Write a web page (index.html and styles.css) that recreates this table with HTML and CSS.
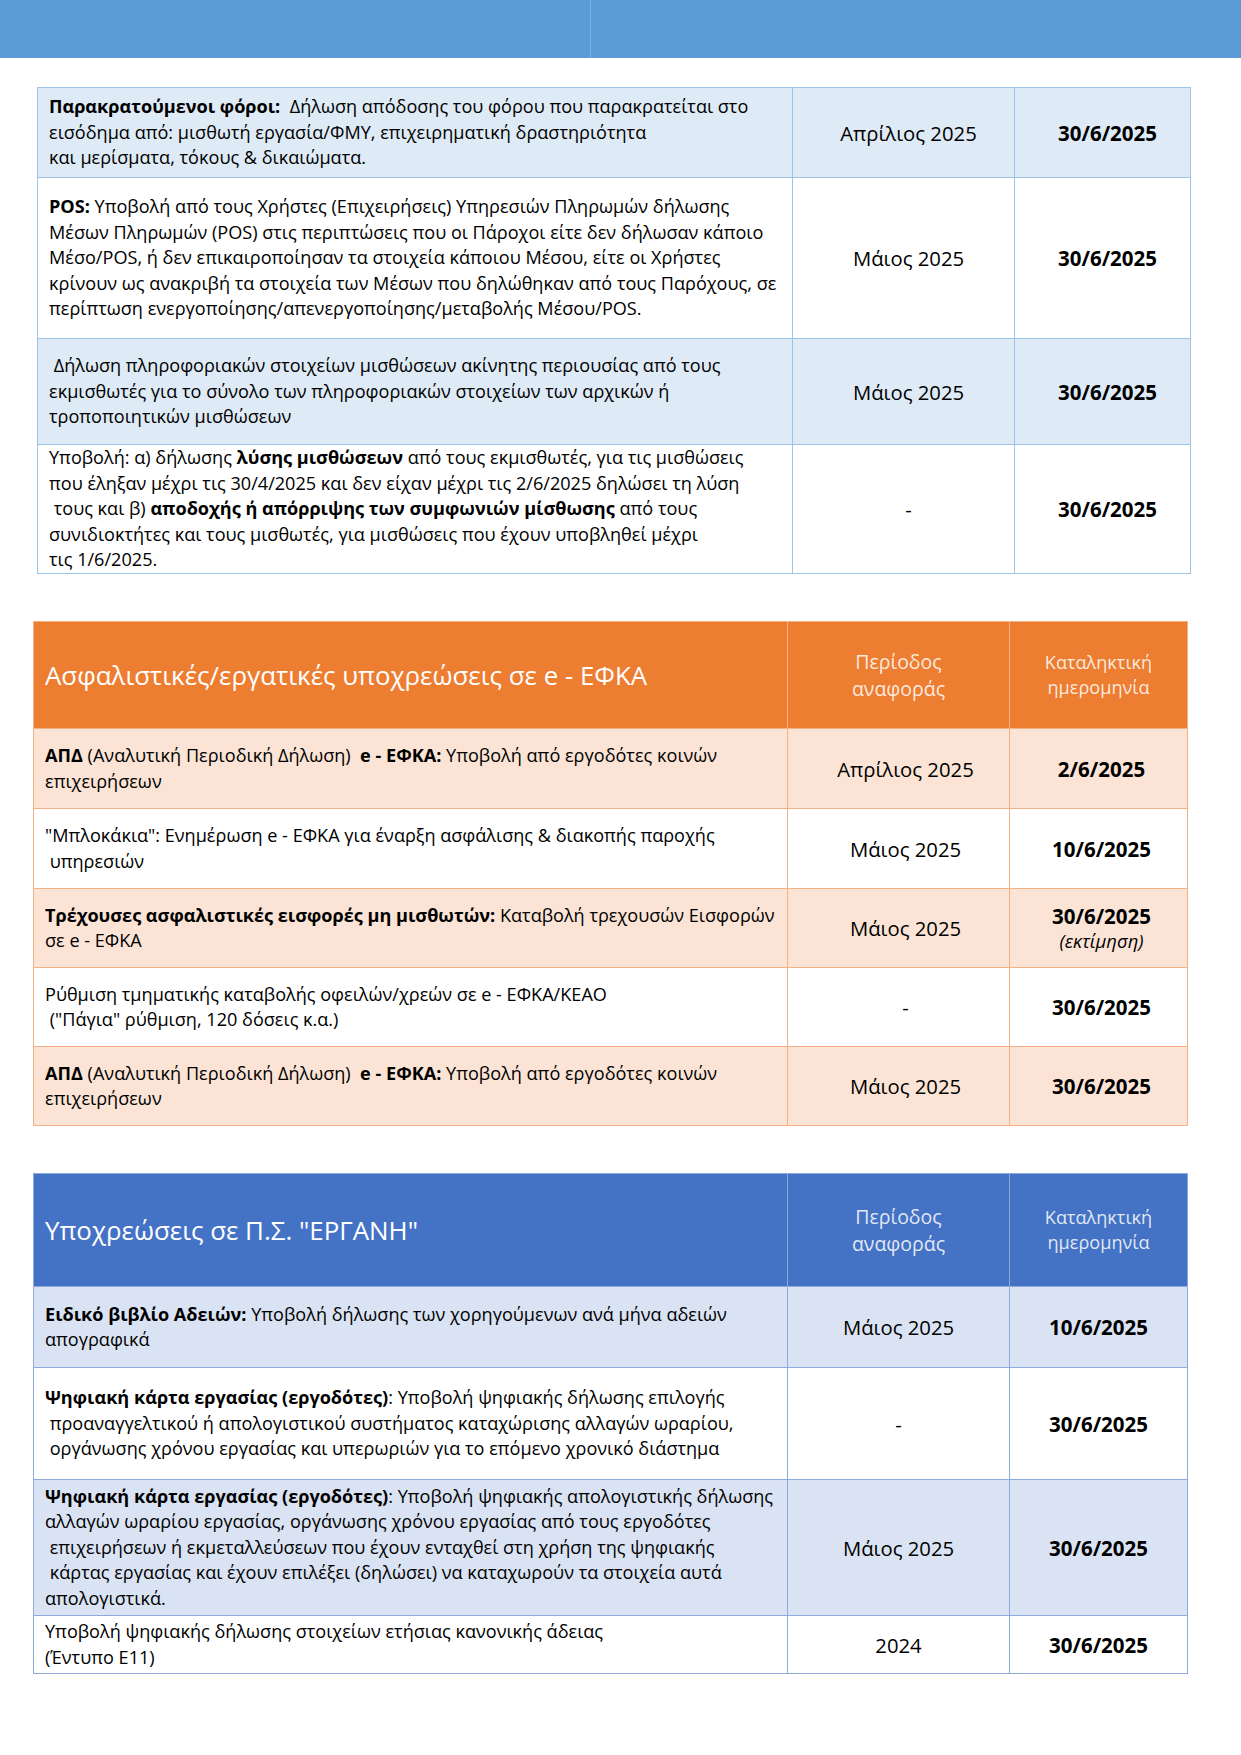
FILE: index.html
```html
<!DOCTYPE html>
<html lang="el">
<head>
<meta charset="utf-8">
<link rel="stylesheet" href="styles.css">
</head>
<body>
<div class="topbar"><div class="topbar-left"></div><div class="topbar-right"></div></div>

<table class="grid t1">
  <colgroup><col class="c1a"><col class="c2"><col class="c3a"></colgroup>
  <tr class="shade h90">
    <td class="desc"><b>Παρακρατούμενοι φόροι:</b>&nbsp; Δήλωση απόδοσης του φόρου που παρακρατείται στο<br>εισόδημα από: μισθωτή εργασία/ΦΜΥ, επιχειρηματική δραστηριότητα<br>και μερίσματα, τόκους &amp; δικαιώματα.</td>
    <td class="period">Απρίλιος 2025</td>
    <td class="date">30/6/2025</td>
  </tr>
  <tr class="h161">
    <td class="desc"><b>POS:</b> Υποβολή από τους Χρήστες (Επιχειρήσεις) Υπηρεσιών Πληρωμών δήλωσης<br>Μέσων Πληρωμών (POS) στις περιπτώσεις που οι Πάροχοι είτε δεν δήλωσαν κάποιο<br>Μέσο/POS, ή δεν επικαιροποίησαν τα στοιχεία κάποιου Μέσου, είτε οι Χρήστες<br>κρίνουν ως ανακριβή τα στοιχεία των Μέσων που δηλώθηκαν από τους Παρόχους, σε<br>περίπτωση ενεργοποίησης/απενεργοποίησης/μεταβολής Μέσου/POS.</td>
    <td class="period">Μάιος 2025</td>
    <td class="date">30/6/2025</td>
  </tr>
  <tr class="shade h106">
    <td class="desc">&nbsp;Δήλωση πληροφοριακών στοιχείων μισθώσεων ακίνητης περιουσίας από τους<br>εκμισθωτές για το σύνολο των πληροφοριακών στοιχείων των αρχικών ή<br>τροποποιητικών μισθώσεων</td>
    <td class="period">Μάιος 2025</td>
    <td class="date">30/6/2025</td>
  </tr>
  <tr class="h129">
    <td class="desc">Υποβολή: α) δήλωσης <b>λύσης μισθώσεων</b> από τους εκμισθωτές, για τις μισθώσεις<br>που έληξαν μέχρι τις 30/4/2025 και δεν είχαν μέχρι τις 2/6/2025 δηλώσει τη λύση<br>&nbsp;τους και β) <b>αποδοχής ή απόρριψης των συμφωνιών μίσθωσης</b> από τους<br>συνιδιοκτήτες και τους μισθωτές, για μισθώσεις που έχουν υποβληθεί μέχρι<br>τις 1/6/2025.</td>
    <td class="period">-</td>
    <td class="date">30/6/2025</td>
  </tr>
</table>

<table class="grid t2">
  <colgroup><col class="c1b"><col class="c2"><col class="c3b"></colgroup>
  <tr class="head h107">
    <th class="title">Ασφαλιστικές/εργατικές υποχρεώσεις σε e - ΕΦΚΑ</th>
    <th class="hperiod">Περίοδος<br>αναφοράς</th>
    <th class="hdate">Καταληκτική<br>ημερομηνία</th>
  </tr>
  <tr class="shade h80">
    <td class="desc"><b>ΑΠΔ</b> (Αναλυτική Περιοδική Δήλωση)&nbsp; <b>e - ΕΦΚΑ:</b> Υποβολή από εργοδότες κοινών<br>επιχειρήσεων</td>
    <td class="period">Απρίλιος 2025</td>
    <td class="date">2/6/2025</td>
  </tr>
  <tr class="h80">
    <td class="desc">"Μπλοκάκια": Ενημέρωση e - ΕΦΚΑ για έναρξη ασφάλισης &amp; διακοπής παροχής<br>&nbsp;υπηρεσιών</td>
    <td class="period">Μάιος 2025</td>
    <td class="date">10/6/2025</td>
  </tr>
  <tr class="shade h79">
    <td class="desc"><b>Τρέχουσες ασφαλιστικές εισφορές μη μισθωτών:</b> Καταβολή τρεχουσών Εισφορών<br>σε e - ΕΦΚΑ</td>
    <td class="period">Μάιος 2025</td>
    <td class="date">30/6/2025<span class="note">(εκτίμηση)</span></td>
  </tr>
  <tr class="h79">
    <td class="desc">Ρύθμιση τμηματικής καταβολής οφειλών/χρεών σε e - ΕΦΚΑ/ΚΕΑΟ<br>&nbsp;("Πάγια" ρύθμιση, 120 δόσεις κ.α.)</td>
    <td class="period">-</td>
    <td class="date">30/6/2025</td>
  </tr>
  <tr class="shade h79">
    <td class="desc"><b>ΑΠΔ</b> (Αναλυτική Περιοδική Δήλωση)&nbsp; <b>e - ΕΦΚΑ:</b> Υποβολή από εργοδότες κοινών<br>επιχειρήσεων</td>
    <td class="period">Μάιος 2025</td>
    <td class="date">30/6/2025</td>
  </tr>
</table>

<table class="grid t3">
  <colgroup><col class="c1b"><col class="c2"><col class="c3b"></colgroup>
  <tr class="head h113">
    <th class="title">Υποχρεώσεις σε Π.Σ. "ΕΡΓΑΝΗ"</th>
    <th class="hperiod">Περίοδος<br>αναφοράς</th>
    <th class="hdate">Καταληκτική<br>ημερομηνία</th>
  </tr>
  <tr class="shade h81">
    <td class="desc"><b>Ειδικό βιβλίο Αδειών:</b> Υποβολή δήλωσης των χορηγούμενων ανά μήνα αδειών<br>απογραφικά</td>
    <td class="period">Μάιος 2025</td>
    <td class="date">10/6/2025</td>
  </tr>
  <tr class="h112">
    <td class="desc"><b>Ψηφιακή κάρτα εργασίας (εργοδότες)</b>: Υποβολή ψηφιακής δήλωσης επιλογής<br>&nbsp;προαναγγελτικού ή απολογιστικού συστήματος καταχώρισης αλλαγών ωραρίου,<br>&nbsp;οργάνωσης χρόνου εργασίας και υπερωριών για το επόμενο χρονικό διάστημα</td>
    <td class="period">-</td>
    <td class="date">30/6/2025</td>
  </tr>
  <tr class="shade h136">
    <td class="desc"><b>Ψηφιακή κάρτα εργασίας (εργοδότες)</b>: Υποβολή ψηφιακής απολογιστικής δήλωσης<br>αλλαγών ωραρίου εργασίας, οργάνωσης χρόνου εργασίας από τους εργοδότες<br>&nbsp;επιχειρήσεων ή εκμεταλλεύσεων που έχουν ενταχθεί στη χρήση της ψηφιακής<br>&nbsp;κάρτας εργασίας και έχουν επιλέξει (δηλώσει) να καταχωρούν τα στοιχεία αυτά<br>απολογιστικά.</td>
    <td class="period">Μάιος 2025</td>
    <td class="date">30/6/2025</td>
  </tr>
  <tr class="h58">
    <td class="desc">Υποβολή ψηφιακής δήλωσης στοιχείων ετήσιας κανονικής άδειας<br>(Έντυπο Ε11)</td>
    <td class="period">2024</td>
    <td class="date">30/6/2025</td>
  </tr>
</table>
</body>
</html>
```

FILE: styles.css
```css
html, body {
  margin: 0;
  padding: 0;
  background: #ffffff;
}
body {
  font-family: "Open Sans", "Noto Sans", "DejaVu Sans", sans-serif;
  color: #000;
  width: 1241px;
}
.topbar {
  height: 58px;
  display: flex;
  background: #5b9bd5;
}
.topbar-left {
  width: 590px;
  border-right: 1px solid #7eb0e0;
}
.topbar-right {
  flex: 1;
}

.grid {
  border-collapse: collapse;
  table-layout: fixed;
}
.t1 {
  width: 1153px;
  margin: 29px 0 0 37px;
}
.t2 {
  width: 1154px;
  margin: 47px 0 0 33px;
}
.t3 {
  width: 1154px;
  margin: 47px 0 0 33px;
}
.c1a { width: 755px; }
.c3a { width: 176px; }
.c1b { width: 754px; }
.c2 { width: 222px; }
.c3b { width: 178px; }

.grid td, .grid th {
  padding: 0 0 0 11px;
  vertical-align: middle;
  font-weight: normal;
}

.desc {
  font-size: 18.1px;
  line-height: 25.5px;
  white-space: nowrap;
  text-align: left;
}
.desc b { font-weight: 700; }

.grid .period {
  font-size: 20.3px;
  text-align: center;
  padding-left: 0;
}
.grid .date {
  font-size: 20.5px;
  font-weight: 700;
  text-align: center;
  padding-left: 0;
  line-height: 26px;
}
.t1 .period, .t1 .date { padding-left: 10px; }
.t2 .period { padding-left: 14px; }
.t2 .date { padding-left: 6px; }
.note {
  display: block;
  font-size: 18.5px;
  font-weight: normal;
  font-style: italic;
  line-height: 24px;
}

/* table 1 */
.t1, .t1 td { border: 1px solid #9dc3e6; }
.t1 .shade { background: #deeaf6; }

/* table 2 */
.t2, .t2 td, .t2 th { border: 1px solid #f4b183; }
.t2 .head { background: #ed7d31; }
.t2 .shade { background: #fbe4d5; }

/* table 3 */
.t3, .t3 td, .t3 th { border: 1px solid #8eaadb; }
.t3 .head { background: #4472c4; }
.t3 .shade { background: #dae3f3; }

.head th { color: #fff; }
.grid .title {
  font-size: 25.9px;
  text-align: left;
  white-space: nowrap;
}
.grid .hperiod {
  font-size: 19.5px;
  line-height: 27px;
  text-align: center;
  padding-left: 0;
  color: rgba(255, 255, 255, 0.85);
}
.grid .hdate {
  font-size: 18.1px;
  line-height: 25px;
  text-align: center;
  padding-left: 0;
  color: rgba(255, 255, 255, 0.85);
}

.h58 { height: 58px; }
.h79 { height: 79px; }
.h80 { height: 80px; }
.h81 { height: 81px; }
.h90 { height: 90px; }
.h106 { height: 106px; }
.h107 { height: 107px; }
.h112 { height: 112px; }
.h113 { height: 113px; }
.h129 { height: 129px; }
.h136 { height: 136px; }
.h161 { height: 161px; }
```
